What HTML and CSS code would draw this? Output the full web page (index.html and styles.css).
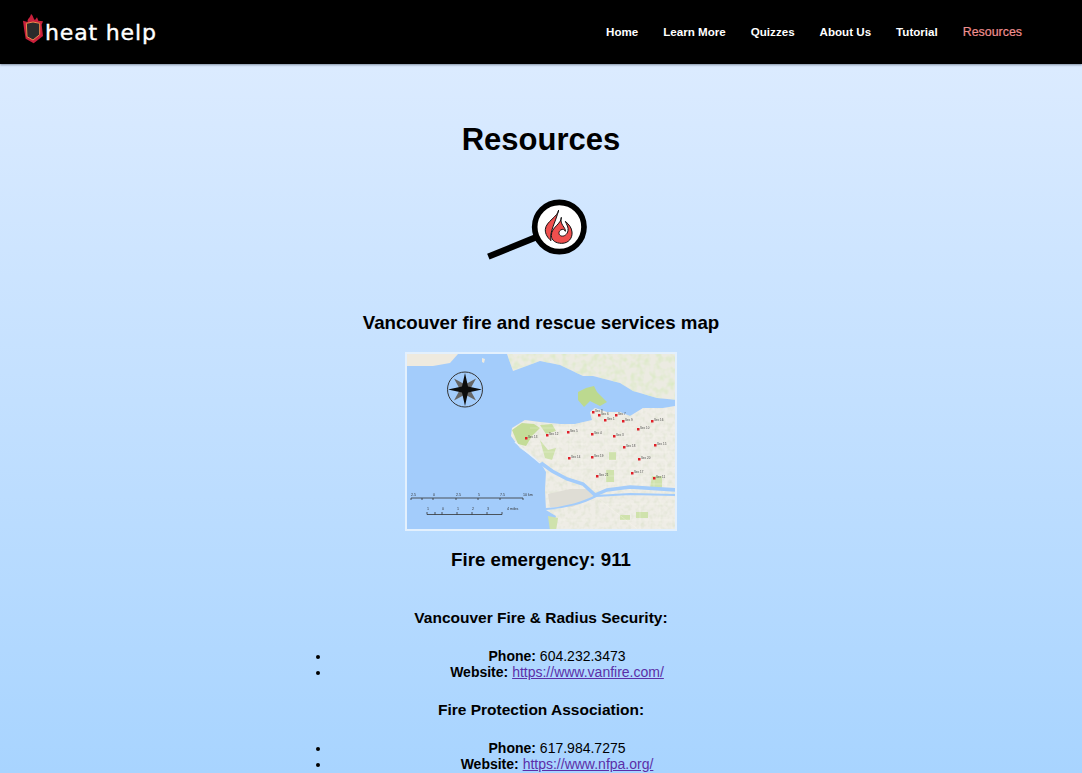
FILE: index.html
```html
<!DOCTYPE html>
<html lang="en">
<head>
<meta charset="utf-8">
<title>Resources</title>
<link rel="stylesheet" href="styles.css">
</head>
<body>
<header class="topbar">
  <a class="brand" href="#">
    <svg class="brand-mark" viewBox="0 0 60 90" aria-hidden="true">
      <path d="M0 20 L14 24 C12 14 22 12 24 0 C32 6 30 14 36 18 L42 10 L46 20 L60 22 L56 32 L60 66 L32 88 L8 74 L4 50 Z" fill="#c9203c"/>
      <path d="M10 28 L30 24 L50 28 L50 62 L30 78 L12 68 Z" fill="#2b2b2b" stroke="#ee8a4a" stroke-width="3"/>
    </svg>
    <span class="brand-name">heat help</span>
  </a>
  <nav class="nav">
    <a href="#">Home</a>
    <a href="#">Learn More</a>
    <a href="#">Quizzes</a>
    <a href="#">About Us</a>
    <a href="#">Tutorial</a>
    <a href="#" class="current">Resources</a>
  </nav>
</header>
<main class="content">
  <h1>Resources</h1>
  <svg class="hero" viewBox="33 30 360 240" aria-hidden="true">
    <line x1="55" y1="212" x2="200" y2="153" stroke="#000" stroke-width="19"/>
    <circle cx="268" cy="123" r="74" fill="#fff" stroke="#000" stroke-width="17"/>
    <path d="M266 72 C264 92 228 106 226 130 C225 145 234 156 243 164 C238 136 256 112 266 72 Z" fill="#ef4f4e" stroke="#111" stroke-width="3"/>
    <path d="M274 94 C274 114 244 124 244 148 C244 164 258 172 275 172 C296 172 308 156 306 138 C305 126 298 116 286 106 C290 116 296 124 294 134 C292 146 282 152 274 150 C266 148 264 138 272 132 C278 128 284 130 286 136 C288 124 268 116 274 94 Z" fill="#ef4f4e" stroke="#111" stroke-width="3"/>
  </svg>
  <h2>Vancouver fire and rescue services map</h2>
  <svg class="map" viewBox="407 354 268 175" role="img" aria-label="Map of Vancouver fire and rescue services">
    <defs>
      <clipPath id="land">
        <path d="M675 406 L663 408 L643 408 L630 416 L620 412 L607 412 L595 408 L590 412 L592 420 L575 424 L560 424 L540 422 L525 420 L512 428 L511 436 L520 448 L540 462 L546 472 L545 490 L546 510 L556 516 L552 531 H677 V406 Z"/>
      </clipPath>
      <clipPath id="north">
        <path d="M507 354 H677 V400 L657 398 L633 391 L620 383 L593 376 L583 376 L560 365 L540 361 L513 371 Z"/>
      </clipPath>
      <filter id="grain" x="0" y="0" width="100%" height="100%">
        <feTurbulence type="fractalNoise" baseFrequency=".16" numOctaves="2" seed="4"/>
        <feColorMatrix values="0 0 0 0 .7  0 0 0 0 .82  0 0 0 0 .55  2 0 0 0 -.8"/>
      </filter>
      <filter id="grain-soft" x="0" y="0" width="100%" height="100%">
        <feTurbulence type="fractalNoise" baseFrequency=".22" numOctaves="2" seed="9"/>
        <feColorMatrix values="0 0 0 0 .72  0 0 0 0 .76  0 0 0 0 .62  1.6 0 0 0 -.68"/>
      </filter>
    </defs>
    <rect x="405" y="352" width="272" height="179" fill="#a3ccfb"/>
    <path d="M407 354 H458 L450 363 L433 366 H407 Z" fill="#eeeadf"/>
    <path d="M482 358 L485 359 L484 363 L482 362 Z" fill="#eeeadf"/>
    <path d="M507 354 H677 V400 L657 398 L633 391 L620 383 L593 376 L583 376 L560 365 L540 361 L513 371 Z" fill="#ecebe2"/>
    <rect x="507" y="354" width="170" height="48" clip-path="url(#north)" filter="url(#grain)"/>
    <path d="M675 406 L663 408 L643 408 L630 416 L620 412 L607 412 L595 408 L590 412 L592 420 L575 424 L560 424 L540 422 L525 420 L512 428 L511 436 L520 448 L540 462 L546 472 L545 490 L546 510 L556 516 L552 531 H677 V406 Z" fill="#efede6"/>
    <rect x="510" y="406" width="167" height="125" clip-path="url(#land)" filter="url(#grain-soft)"/>
    <path d="M578 392 L586 388 L594 386 L597 392 L607 402 L600 406 L590 401 L584 407 L578 400 Z" fill="#bcd98f"/>
    <path d="M512 430 L522 423 L534 424 L540 428 L532 436 L526 446 L518 444 Z" fill="#c4dc98"/>
    <path d="M540 425 L552 424 L556 431 L546 434 Z" fill="#c9dfa2"/>
    <path d="M540 440 L548 450 L556 448 L552 460 L545 458 Z M606 470 H614 V482 H606 Z M652 476 H662 V488 H650 Z M609 452 H616 V460 H609 Z M620 515 H630 V520 H620 Z M636 512 H648 V518 H636 Z M548 516 L558 518 L556 531 H550 Z" fill="#cfe2ac"/>
    <g class="streets" clip-path="url(#land)">
      <path d="M530 428 H677 M530 436 H677 M530 444 H677 M540 452 H677 M545 460 H677 M545 468 H677 M590 476 H677 M600 484 H677 M600 504 H677 M560 520 H677"/>
      <path d="M558 420 V470 M570 420 V478 M582 420 V484 M594 412 V490 M606 412 V490 M618 412 V490 M630 416 V490 M642 408 V490 M654 408 V490 M666 408 V490 M600 500 L640 531 M640 500 V531 M660 500 V531"/>
    </g>
    <path d="M548 494 L570 489 L590 489 L596 497 L572 507 L550 507 Z" fill="#dfddd5"/>
    <path d="M541 463 L552 471 L567 479 L583 484 L595 495 L607 490 L630 487 L677 490" fill="none" stroke="#a3ccfb" stroke-width="3.500"/>
    <path d="M546 509 C565 508 585 502 596 496 L630 494 L677 495" fill="none" stroke="#a3ccfb" stroke-width="2"/>
    <path d="M515 442 L540 463" fill="none" stroke="#e8f0f7" stroke-width="1.500"/>
    <g fill="#e01f28">
      <rect x="592" y="411" width="2.500" height="2.500"/><rect x="598" y="414" width="2.500" height="2.500"/><rect x="604" y="419" width="2.500" height="2.500"/>
      <rect x="615" y="414" width="2.500" height="2.500"/><rect x="622" y="420" width="2.500" height="2.500"/><rect x="651" y="420" width="2.500" height="2.500"/>
      <rect x="637" y="428" width="2.500" height="2.500"/><rect x="613" y="435" width="2.500" height="2.500"/><rect x="591" y="433" width="2.500" height="2.500"/>
      <rect x="567" y="431" width="2.500" height="2.500"/><rect x="546" y="434" width="2.500" height="2.500"/><rect x="525" y="437" width="2.500" height="2.500"/>
      <rect x="623" y="446" width="2.500" height="2.500"/><rect x="654" y="444" width="2.500" height="2.500"/><rect x="638" y="458" width="2.500" height="2.500"/>
      <rect x="591" y="456" width="2.500" height="2.500"/><rect x="568" y="457" width="2.500" height="2.500"/><rect x="631" y="472" width="2.500" height="2.500"/>
      <rect x="653" y="477" width="2.500" height="2.500"/><rect x="596" y="475" width="2.500" height="2.500"/>
    </g>
    <g class="map-labels">
      <text x="595" y="412">Sec 8</text><text x="601" y="415">Sec 6</text><text x="607" y="420">Sec 1</text>
      <text x="618" y="415">Sec 7</text><text x="625" y="421">Sec 9</text><text x="654" y="421">Sec 16</text>
      <text x="640" y="429">Sec 10</text><text x="616" y="436">Sec 3</text><text x="594" y="434">Sec 4</text>
      <text x="570" y="432">Sec 5</text><text x="549" y="435">Sec 12</text><text x="528" y="438">Sec 13</text>
      <text x="626" y="447">Sec 18</text><text x="657" y="445">Sec 15</text><text x="641" y="459">Sec 20</text>
      <text x="594" y="457">Sec 19</text><text x="571" y="458">Sec 14</text><text x="634" y="473">Sec 17</text>
      <text x="656" y="478">Sec 11</text><text x="599" y="476">Sec 21</text>
    </g>
    <g>
      <circle cx="465" cy="389.500" r="17.500" fill="none" stroke="#333" stroke-width="1"/>
      <path d="M454 378.500 L465 384.500 L476 378.500 L470 389.500 L476 400.500 L465 394.500 L454 400.500 L460 389.500 Z" fill="#666"/>
      <path d="M465 373 L468 386.500 L482 389.500 L468 392.500 L465 406 L462 392.500 L448 389.500 L462 386.500 Z" fill="#0c0c0c"/>
    </g>
    <g fill="none" stroke="#333" stroke-width=".8">
      <path d="M411 500 V498 H523 V500 M422 498 V500 M433 498 V500 M456 498 V500 M478 498 V500 M500 498 V500"/>
      <path d="M427 512 V514.500 H502 V512 M435 512 V514.500 M442 512 V514.500 M457 512 V514.500 M472 512 V514.500 M487 512 V514.500"/>
    </g>
    <g class="scale-labels">
      <text x="411" y="495.500">2.5</text><text x="433" y="495.500">0</text><text x="456" y="495.500">2.5</text><text x="478" y="495.500">5</text><text x="500" y="495.500">7.5</text><text x="523" y="495.500">10 km</text>
      <text x="427" y="509.500">1</text><text x="442" y="509.500">0</text><text x="457" y="509.500">1</text><text x="472" y="509.500">2</text><text x="487" y="509.500">3</text><text x="507" y="509.500">4 miles</text>
    </g>
  </svg>
  <h2 class="emergency">Fire emergency: 911</h2>
  <h3>Vancouver Fire &amp; Radius Security:</h3>
  <ul class="contacts">
    <li><b>Phone:</b> 604.232.3473</li>
    <li><b>Website:</b> <a href="#">https://www.vanfire.com/</a></li>
  </ul>
  <h3>Fire Protection Association:</h3>
  <ul class="contacts">
    <li><b>Phone:</b> 617.984.7275</li>
    <li><b>Website:</b> <a href="#">https://www.nfpa.org/</a></li>
  </ul>
</main>
</body>
</html>
```
FILE: styles.css
```css
html {
  background: #a8d4ff;
}
body {
  margin: 0;
  height: 773px;
  overflow: hidden;
  font-family: "Liberation Sans", Arial, sans-serif;
  color: #000;
  background: linear-gradient(#e0edff, #a8d4ff);
}
.topbar {
  height: 64px;
  background: #000;
  display: flex;
  align-items: center;
  justify-content: space-between;
  padding: 0 60px 0 23px;
  box-shadow: 0 1px 2px rgba(40, 50, 70, .5);
}
.brand {
  display: flex;
  align-items: flex-start;
  gap: 2px;
  text-decoration: none;
  margin-bottom: 4px;
}
.brand-mark {
  width: 20px;
  height: 30px;
}
.brand-name {
  color: #fff;
  font: 400 22px/26px "DejaVu Sans", sans-serif;
  letter-spacing: .85px;
  -webkit-text-stroke: .4px #fff;
  margin-top: 6px;
}
.nav {
  display: flex;
  gap: 25px;
  margin-bottom: 1px;
}
.nav a {
  color: #fff;
  font-size: 11.600px;
  font-weight: 700;
  text-decoration: none;
}
.nav a.current {
  color: #f08f8f;
  font-weight: 400;
  font-size: 12.400px;
  -webkit-text-stroke: .2px #f08f8f;
}
.content {
  display: flex;
  flex-direction: column;
  align-items: center;
  text-align: center;
}
h1 {
  margin: 57px 0 0;
  font-size: 31px;
  line-height: 37px;
}
.hero {
  width: 120px;
  height: 80px;
  margin-top: 38px;
}
h2 {
  margin: 35px 0 0;
  font-size: 18.720px;
  line-height: 23px;
}
.map {
  width: 268px;
  height: 175px;
  margin-top: 18px;
  border: 2px solid #e3f0fd;
  filter: blur(.45px);
}
.emergency {
  margin-top: 17px;
}
h3 {
  margin: 38px 0 0;
  font-size: 15.500px;
  line-height: 18px;
}
.contacts + h3 {
  margin-top: 20.500px;
}
.contacts {
  align-self: flex-start;
  box-sizing: border-box;
  width: 492px;
  margin: 21px 0 0 291px;
  padding-left: 40px;
  list-style: disc;
  font-size: 14px;
  line-height: 16px;
}
.contacts a {
  color: #5b2fa8;
}
.streets {
  fill: none;
  stroke: #fffdf2;
  stroke-width: .5;
  opacity: .55;
}
.map-labels text {
  font: 3px "Liberation Sans", sans-serif;
  fill: #444;
}
.scale-labels text {
  font: 3.600px "Liberation Sans", sans-serif;
  fill: #333;
}
```
